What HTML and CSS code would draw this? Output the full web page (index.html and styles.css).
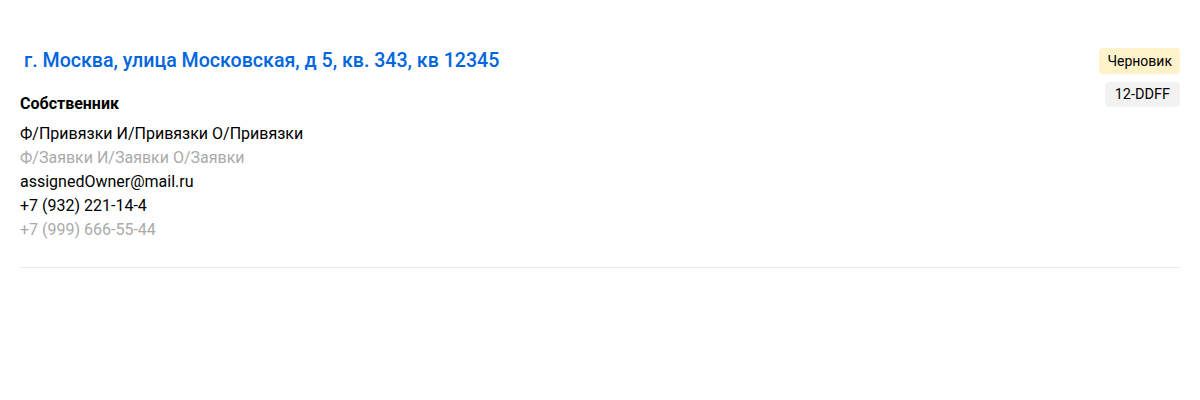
FILE: index.html
```html
<!DOCTYPE html>
<html lang="ru">
<head>
<meta charset="utf-8">
<link rel="stylesheet" href="styles.css">
</head>
<body>
<div class="card">
  <div class="header">
    <a class="title" href="#">г. Москва, улица Московская, д 5, кв. 343, кв 12345</a>
    <div class="badges">
      <span class="badge badge-draft">Черновик</span>
      <span class="badge badge-code">12-DDFF</span>
    </div>
  </div>
  <div class="owner">
    <div class="owner-title">Собственник</div>
    <div class="line">Ф/Привязки И/Привязки О/Привязки</div>
    <div class="line muted">Ф/Заявки И/Заявки О/Заявки</div>
    <div class="line">assignedOwner@mail.ru</div>
    <div class="line">+7 (932) 221-14-4</div>
    <div class="line muted">+7 (999) 666-55-44</div>
  </div>
</div>
</body>
</html>
```
FILE: styles.css
```css
html, body {
  margin: 0;
  padding: 0;
  background: #fff;
}
body {
  font-family: Roboto, "Liberation Sans", sans-serif;
  color: #000;
}
.card {
  margin: 0 20px;
  padding-top: 48px;
  padding-bottom: 25px;
  border-bottom: 1px solid #ebebeb;
}
.header {
  display: flex;
  justify-content: space-between;
  align-items: flex-start;
}
.title {
  font-size: 19.6px;
  font-weight: 500;
  line-height: 26px;
  color: #0066dd;
  text-decoration: none;
  padding-left: 4px;
}
.badges {
  display: flex;
  flex-direction: column;
  align-items: flex-end;
  gap: 8px;
}
.badge {
  font-size: 14px;
  line-height: 18px;
  padding: 4px 8px;
  border-radius: 4px;
}
.badge-draft { background: #fff3cc; }
.badge-code {
  background: #f2f2f2;
  padding: 4px 10px 3px;
  font-size: 14.5px;
}
.owner {
  margin-top: -13px;
}
.owner-title {
  font-size: 16px;
  font-weight: 700;
  line-height: 20px;
  margin-bottom: 7.5px;
}
.line {
  font-size: 16px;
  line-height: 24px;
}
.muted { color: #aaaaaa; }
```
